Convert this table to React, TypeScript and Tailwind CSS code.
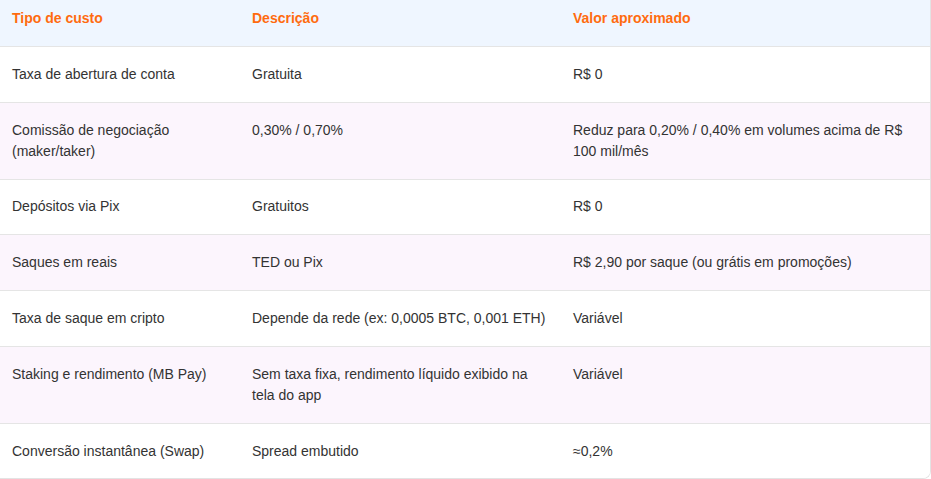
import React from "react";

type Row = {
    tipo: string;
    descricao: string;
    valor: string;
};

const ROWS: Row[] = [
    { tipo: "Taxa de abertura de conta", descricao: "Gratuita", valor: "R$ 0" },
    {
        tipo: "Comissão de negociação (maker/taker)",
        descricao: "0,30% / 0,70%",
        valor: "Reduz para 0,20% / 0,40% em volumes acima de R$ 100 mil/mês",
    },
    { tipo: "Depósitos via Pix", descricao: "Gratuitos", valor: "R$ 0" },
    { tipo: "Saques em reais", descricao: "TED ou Pix", valor: "R$ 2,90 por saque (ou grátis em promoções)" },
    { tipo: "Taxa de saque em cripto", descricao: "Depende da rede (ex: 0,0005 BTC, 0,001 ETH)", valor: "Variável" },
    {
        tipo: "Staking e rendimento (MB Pay)",
        descricao: "Sem taxa fixa, rendimento líquido exibido na tela do app",
        valor: "Variável",
    },
    { tipo: "Conversão instantânea (Swap)", descricao: "Spread embutido", valor: "≈0,2%" },
];

export default function App() {
    return (
        <div
            className="h-[479px] w-[931px] overflow-hidden rounded-br-lg border-r border-b border-[#e3e3e3] bg-white"
            style={{ fontFamily: '"Liberation Sans", Arial, sans-serif' }}
        >
            <table className="w-full table-fixed border-collapse text-left text-[14px] leading-[21px] text-[#333333]">
                <colgroup>
                    <col className="w-[240px]" />
                    <col className="w-[321px]" />
                    <col />
                </colgroup>
                <thead>
                    <tr className="border-b border-[#e5e5e5] bg-[#eff6ff]">
                        <th className="px-3 pt-2 pb-[17px] font-bold text-[#ff6b0f]">Tipo de custo</th>
                        <th className="px-3 pt-2 pb-[17px] font-bold text-[#ff6b0f]">Descrição</th>
                        <th className="px-3 pt-2 pb-[17px] font-bold text-[#ff6b0f]">Valor aproximado</th>
                    </tr>
                </thead>
                <tbody>
                    {ROWS.map((r, i) => (
                        <tr
                            key={r.tipo}
                            className={`border-b border-[#e5e5e5] ${i % 2 === 1 ? "bg-[#fcf5fd]" : "bg-white"}`}
                        >
                            <td className="px-3 py-[16.9px] align-top">{r.tipo}</td>
                            <td className="px-3 py-[16.9px] align-top">{r.descricao}</td>
                            <td className="px-3 py-[16.9px] align-top">{r.valor}</td>
                        </tr>
                    ))}
                </tbody>
            </table>
        </div>
    );
}
